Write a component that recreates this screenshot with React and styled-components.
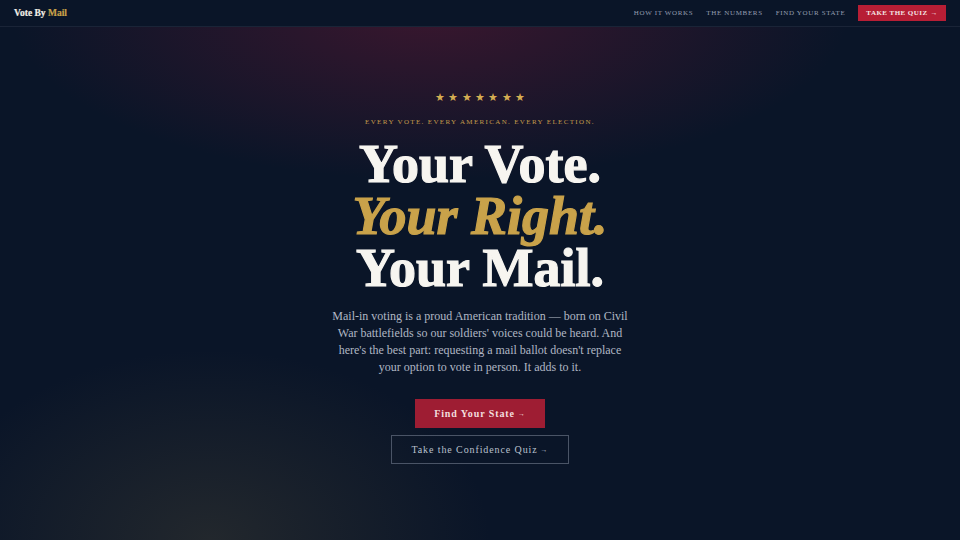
import React from "react";
import styled, { createGlobalStyle } from "styled-components";

const GlobalStyle = createGlobalStyle`
  html, body {
    margin: 0;
    padding: 0;
    background: #0a1528;
  }
  body {
    font-family: "Liberation Serif", "DejaVu Serif", serif;
    -webkit-font-smoothing: antialiased;
  }
`;

const navLinks = ["How It Works", "The Numbers", "Find Your State"];

export default function App() {
  return (
    <Page>
      <GlobalStyle />
      <Header>
        <Brand>
          Vote By <BrandAccent>Mail</BrandAccent>
        </Brand>
        <Nav>
          {navLinks.map((l) => (
            <NavLink key={l} href="#">
              {l}
            </NavLink>
          ))}
          <NavCta href="#">
            Take the Quiz <Arrow>→</Arrow>
          </NavCta>
        </Nav>
      </Header>
      <Hero>
        <Stars>★★★★★★★</Stars>
        <Tagline>Every vote. Every American. Every election.</Tagline>
        <Headline>
          <Line>Your Vote.</Line>
          <Line $accent>Your Right.</Line>
          <Line>Your Mail.</Line>
        </Headline>
        <Lead>
          Mail-in voting is a proud American tradition — born on Civil War
          battlefields so our soldiers' voices could be heard. And here's the
          best part: requesting a mail ballot doesn't replace your option to
          vote in person. It adds to it.
        </Lead>
        <Actions>
          <Button href="#" $primary>
            Find Your State <Arrow>→</Arrow>
          </Button>
          <Button href="#">
            Take the Confidence Quiz <Arrow>→</Arrow>
          </Button>
        </Actions>
      </Hero>
    </Page>
  );
}

const Page = styled.div`
  width: 960px;
  height: 540px;
  overflow: hidden;
  display: flex;
  flex-direction: column;
  background:
    radial-gradient(ellipse 420px 170px at 430px 10px, rgba(105, 24, 52, 0.5), rgba(105, 24, 52, 0) 100%),
    radial-gradient(ellipse 280px 190px at 210px 540px, rgba(85, 78, 55, 0.32), rgba(85, 78, 55, 0) 100%),
    #0a1528;
`;

const Header = styled.header`
  height: 27px;
  flex-shrink: 0;
  box-sizing: border-box;
  display: flex;
  align-items: center;
  justify-content: space-between;
  padding: 0 14px;
  background: #0a1528;
  border-bottom: 1px solid #1a2437;
`;

const Brand = styled.div`
  font-size: 9.5px;
  font-weight: 700;
  color: #f1eee6;
  -webkit-text-stroke: 0.2px currentColor;
`;

const BrandAccent = styled.span`
  color: #c9a24a;
`;

const Nav = styled.nav`
  display: flex;
  align-items: center;
  gap: 13px;
`;

const NavLink = styled.a`
  font-size: 7px;
  letter-spacing: 0.65px;
  text-transform: uppercase;
  color: #939daf;
  text-decoration: none;
`;

const NavCta = styled.a`
  height: 16px;
  display: flex;
  align-items: center;
  padding: 0 8px;
  background: #b71e35;
  color: #f4e5e5;
  font-size: 7px;
  font-weight: 700;
  letter-spacing: 0.45px;
  text-transform: uppercase;
  text-decoration: none;
`;

const Hero = styled.main`
  display: flex;
  flex-direction: column;
  align-items: center;
  padding-top: 63px;
`;

const Stars = styled.div`
  font-size: 11px;
  color: #d4ad52;
  letter-spacing: 3.3px;
  margin-right: -3.3px;
  line-height: 14px;
`;

const Tagline = styled.div`
  margin-top: 13px;
  font-size: 7px;
  letter-spacing: 1.35px;
  text-transform: uppercase;
  color: #c39c4a;
  line-height: 10px;
`;

const Headline = styled.h1`
  margin: 11px 0 0;
  display: flex;
  flex-direction: column;
  align-items: center;
  font-size: 54px;
  font-weight: 700;
  line-height: 52px;
  letter-spacing: 0;
  -webkit-text-stroke: 1.2px currentColor;
`;

const Line = styled.span`
  color: ${(p) => (p.$accent ? "#c9a24a" : "#f7f5f0")};
  font-style: ${(p) => (p.$accent ? "italic" : "normal")};
`;

const Lead = styled.p`
  margin: 14px 0 0;
  width: 300px;
  text-align: center;
  font-size: 12px;
  line-height: 17px;
  color: #b0b7c4;
`;

const Actions = styled.div`
  margin-top: 23px;
  display: flex;
  flex-direction: column;
  align-items: center;
  gap: 7px;
`;

const Button = styled.a`
  height: 29px;
  box-sizing: border-box;
  display: flex;
  align-items: center;
  padding: 0 ${(p) => (p.$primary ? 18 : 19)}px;
  font-size: 10px;
  letter-spacing: 0.9px;
  text-decoration: none;
  font-weight: ${(p) => (p.$primary ? 700 : 400)};
  color: ${(p) => (p.$primary ? "#f3dede" : "#b9c1cd")};
  background: ${(p) => (p.$primary ? "#9e1d33" : "transparent")};
  border: 1px solid ${(p) => (p.$primary ? "#9e1d33" : "#4a5466")};
`;

const Arrow = styled.span`
  font-size: 7px;
  margin-left: 3px;
`;
